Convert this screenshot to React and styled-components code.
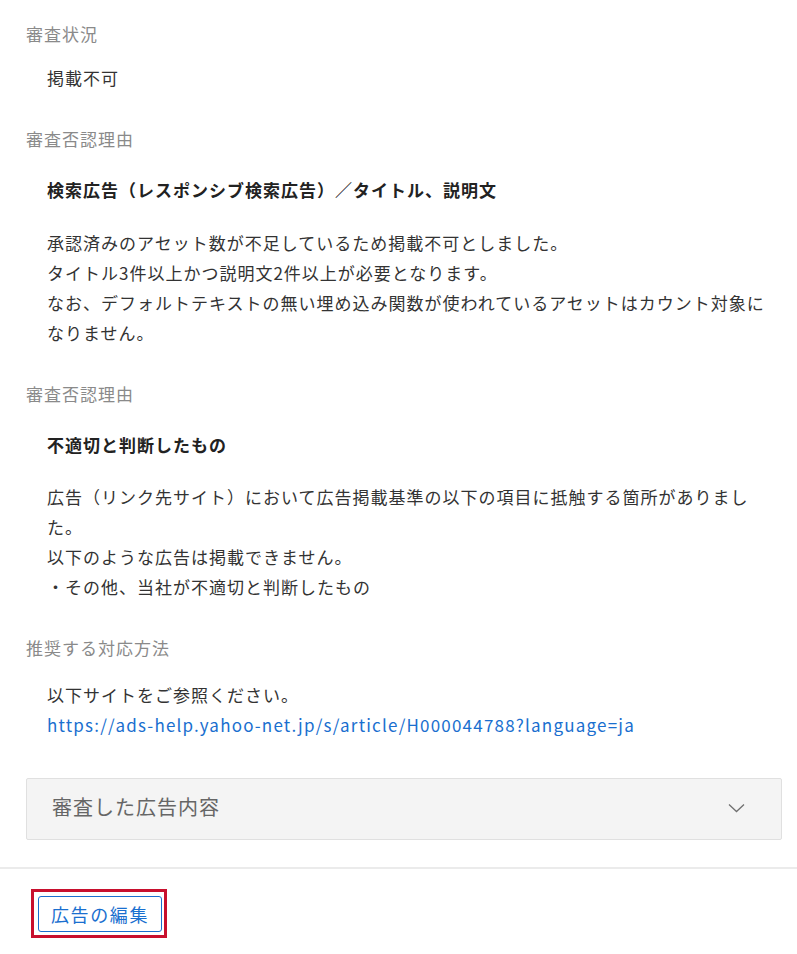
import React from "react";
import styled, { createGlobalStyle } from "styled-components";

const Global = createGlobalStyle`
  html, body { margin: 0; padding: 0; background: #fff; }
  body {
    font-family: "Noto Sans CJK JP", "Noto Sans", sans-serif;
    color: #333;
  }
`;

const Page = styled.div`
  width: 797px;
  display: flex;
  flex-direction: column;
`;

const Body = styled.div`
  display: flex;
  flex-direction: column;
  padding: 19px 15px 27px 26px;
`;

const Section = styled.section`
  display: flex;
  flex-direction: column;
  margin-top: ${(p) => (p.$first ? 0 : 31)}px;
`;

const Label = styled.div`
  font-size: 17px;
  letter-spacing: 1px;
  line-height: 30px;
  color: #8a8a8a;
`;

const Content = styled.div`
  margin-left: 21px;
  margin-top: ${(p) => p.$gap ?? 16}px;
  font-size: 17px;
  letter-spacing: 1px;
  line-height: 30px;
  color: #333;
  line-break: strict;
`;

const Title = styled.div`
  margin-left: 21px;
  margin-top: 21px;
  font-size: 17px;
  letter-spacing: 1px;
  line-height: 30px;
  font-weight: 700;
  color: #222;
`;

const Line = styled.div``;

const Link = styled.a`
  color: #1a6fcf;
  text-decoration: none;
  letter-spacing: 1.2px;
`;

const Accordion = styled.div`
  margin-top: 38px;
  height: 60px;
  border: 1px solid #e0e0e0;
  border-radius: 2px;
  background: #f4f4f4;
  display: flex;
  align-items: center;
  justify-content: space-between;
  padding: 0 36px 0 25px;
`;

const AccordionTitle = styled.div`
  font-size: 20px;
  letter-spacing: 1px;
  color: #666;
  margin-top: -5px;
`;

const Chevron = styled.svg`
  width: 17px;
  height: 10px;
  margin-top: -3px;
`;

const Divider = styled.hr`
  margin: 0;
  border: none;
  border-top: 2px solid #ebebeb;
`;

const Footer = styled.div`
  display: flex;
  padding: 20px 0 16px 31px;
`;

const FocusRing = styled.div`
  display: inline-flex;
  border: 3px solid #c8102e;
  padding: 4px 2px 3px 4px;
`;

const EditButton = styled.button`
  font-family: "Noto Sans CJK JP", sans-serif;
  height: 36px;
  padding: 0 12px 0 12px;
  font-size: 18px;
  letter-spacing: 1.6px;
  color: #1a6fcf;
  background: #fff;
  border: 1px solid #1a6fcf;
  border-radius: 3px;
  cursor: pointer;
`;

export default function App() {
  return (
    <Page>
      <Global />
      <Body>
        <Section $first>
          <Label>審査状況</Label>
          <Content $gap={14}>掲載不可</Content>
        </Section>
        <Section>
          <Label>審査否認理由</Label>
          <Title>検索広告（レスポンシブ検索広告）／タイトル、説明文</Title>
          <Content $gap={23}>
            <Line>承認済みのアセット数が不足しているため掲載不可としました。</Line>
            <Line>タイトル3件以上かつ説明文2件以上が必要となります。</Line>
            <Line>
              なお、デフォルトテキストの無い埋め込み関数が使われているアセットはカウント対象になりません。
            </Line>
          </Content>
        </Section>
        <Section>
          <Label>審査否認理由</Label>
          <Title>不適切と判断したもの</Title>
          <Content $gap={22}>
            <Line>
              広告（リンク先サイト）において広告掲載基準の以下の項目に抵触する箇所がありました。
            </Line>
            <Line>以下のような広告は掲載できません。</Line>
            <Line>・その他、当社が不適切と判断したもの</Line>
          </Content>
        </Section>
        <Section>
          <Label>推奨する対応方法</Label>
          <Content $gap={17}>
            <Line>以下サイトをご参照ください。</Line>
            <Line>
              <Link href="#">
                https://ads-help.yahoo-net.jp/s/article/H000044788?language=ja
              </Link>
            </Line>
          </Content>
        </Section>
        <Accordion>
          <AccordionTitle>審査した広告内容</AccordionTitle>
          <Chevron viewBox="0 0 17 10" fill="none">
            <path d="M1 1.5 L8.5 8.5 L16 1.5" stroke="#707070" strokeWidth="1.3" />
          </Chevron>
        </Accordion>
      </Body>
      <Divider />
      <Footer>
        <FocusRing>
          <EditButton>広告の編集</EditButton>
        </FocusRing>
      </Footer>
    </Page>
  );
}
